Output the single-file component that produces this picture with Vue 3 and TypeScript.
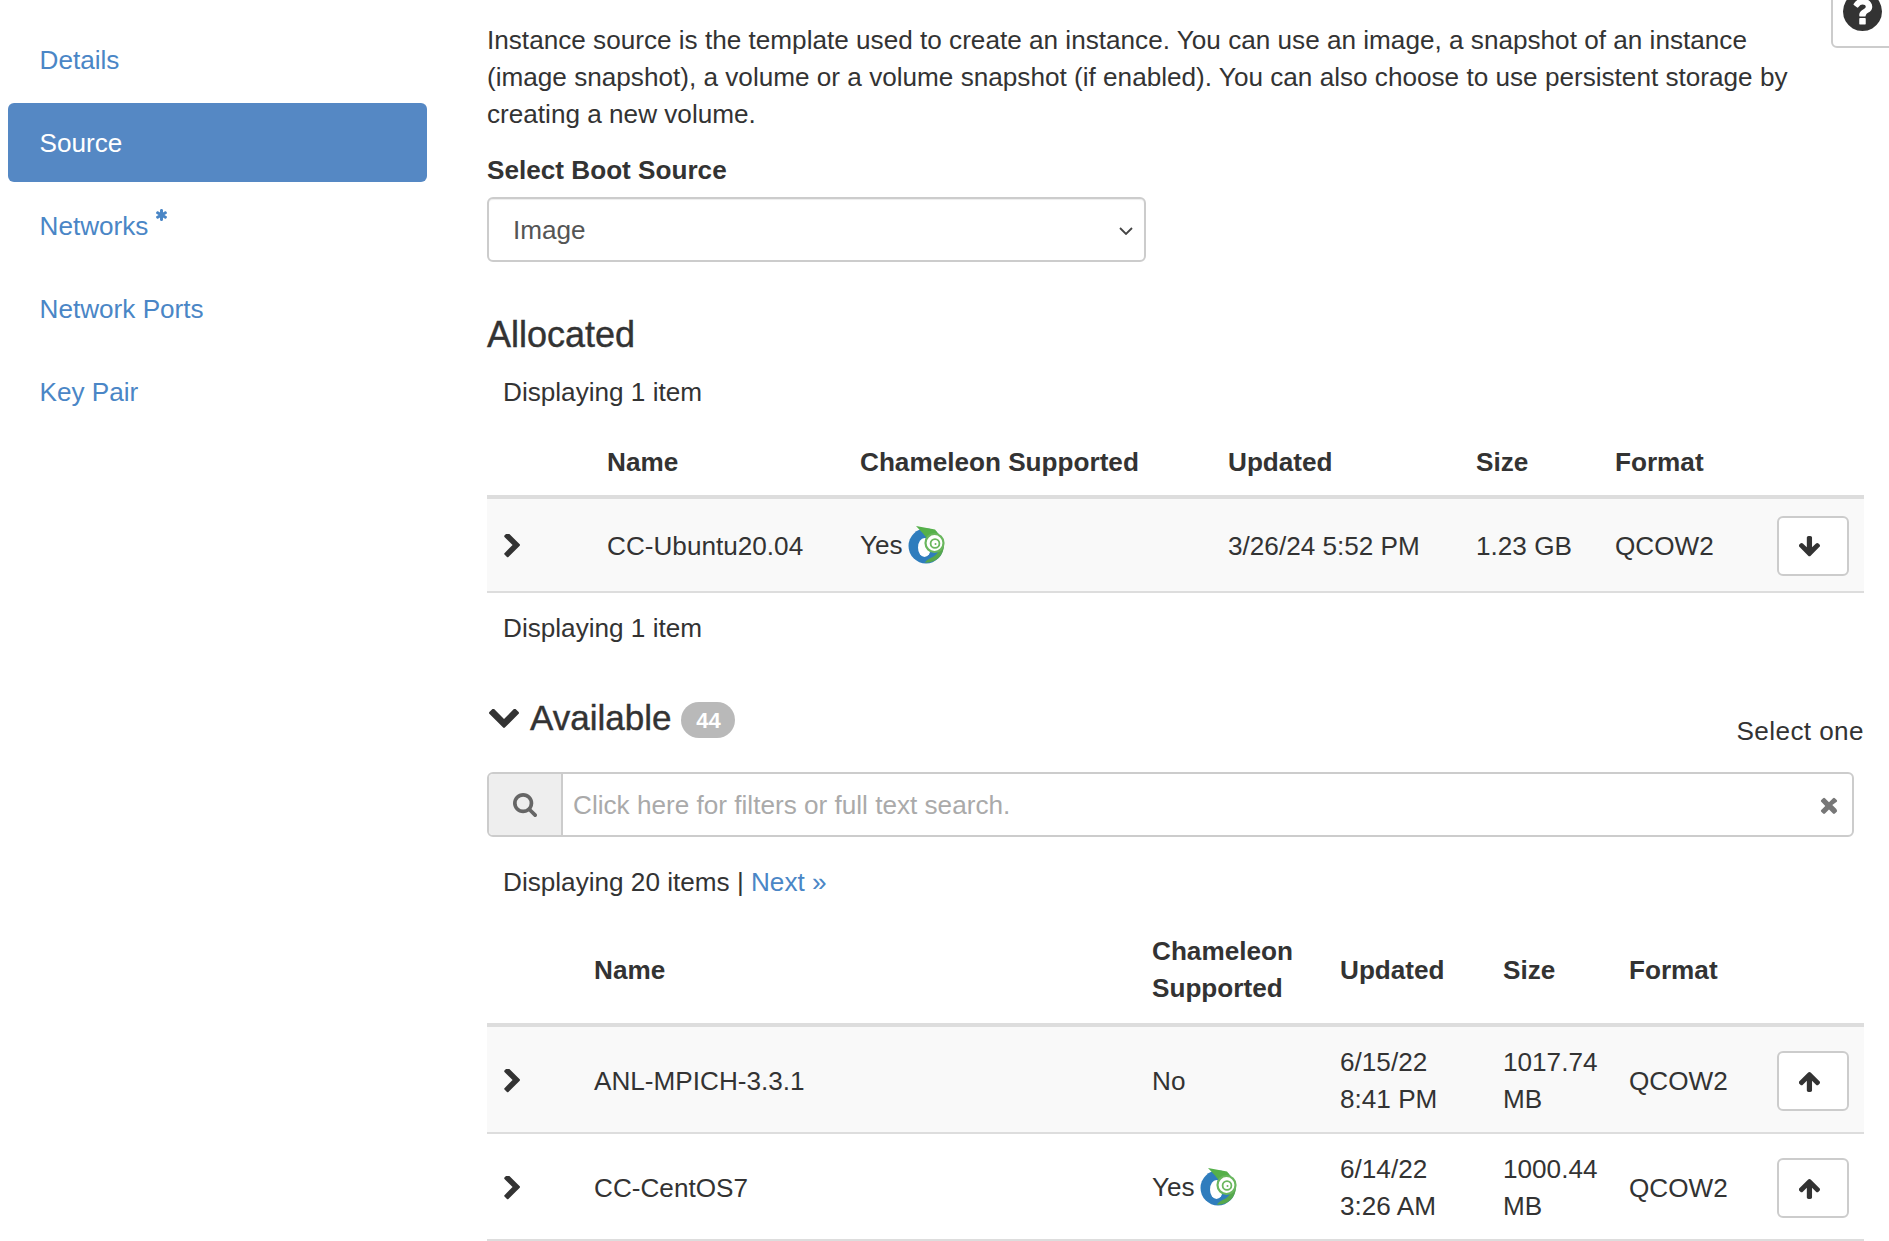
<script setup lang="ts">
const navItems = [
  { label: 'Details', active: false, req: false },
  { label: 'Source', active: true, req: false },
  { label: 'Networks', active: false, req: true },
  { label: 'Network Ports', active: false, req: false },
  { label: 'Key Pair', active: false, req: false },
]
const available = [
  { name: 'ANL-MPICH-3.3.1', supported: false, date: '6/15/22', time: '8:41 PM', size: '1017.74', unit: 'MB' },
  { name: 'CC-CentOS7', supported: true, date: '6/14/22', time: '3:26 AM', size: '1000.44', unit: 'MB' },
]
const chevronRight = 'M1363 877l-742 742q-19 19-45 19t-45-19l-166-166q-19-19-19-45t19-45l531-531-531-531q-19-19-19-45t19-45l166-166q19-19 45-19t45 19l742 742q19 19 19 45t-19 45z'
const arrowDown = 'M1675 832q0 53-37 90l-651 652q-39 37-91 37-53 0-90-37l-651-652q-38-36-38-90 0-53 38-91l74-75q39-37 91-37 53 0 90 37l294 294V256q0-52 38-90t90-38h128q52 0 90 38t38 90v704l294-294q37-37 90-37 52 0 91 37l75 75q37 39 37 91z'
const arrowUp = 'M1675 971q0 51-37 90l-75 75q-38 38-91 38-54 0-90-38l-294-293v704q0 52-37.5 84.5T960 1664H832q-53 0-90.5-32.5T704 1547V843l-294 293q-36 38-90 38t-90-38l-75-75q-38-38-38-90 0-53 38-91l651-651q35-37 90-37 54 0 91 37l651 651q37 39 37 91z'
</script>

<template>
  <div class="page">
    <nav class="side">
      <a v-for="item in navItems" :key="item.label" class="nav-item" :class="{ active: item.active }">
        {{ item.label }}
        <svg v-if="item.req" class="req" viewBox="180 128 1432 1536"><path fill="currentColor" d="M1546 1050q46 26 59.5 77.5T1593 1225l-64 110q-26 46-77.5 59.5T1354 1382l-266-153v307q0 52-38 90t-90 38H832q-52 0-90-38t-38-90v-307l-266 153q-46 26-97.5 12.5T263 1335l-64-110q-26-46-12.5-97.5T246 1050l266-154-266-154q-46-26-59.5-77.5T199 567l64-110q26-46 77.5-59.5T438 410l266 153V256q0-52 38-90t90-38h128q52 0 90 38t38 90v307l266-153q46-26 97.5-12.5T1529 457l64 110q26 46 12.5 97.5T1546 742l-266 154z"/></svg>
      </a>
    </nav>

    <main class="main">
      <p class="intro">Instance source is the template used to create an instance. You can use an image, a snapshot of an instance (image snapshot), a volume or a volume snapshot (if enabled). You can also choose to use persistent storage by creating a new volume.</p>

      <div class="label">Select Boot Source</div>
      <div class="select">
        <span>Image</span>
        <svg class="caret" viewBox="0 0 14 8"><path d="M1 1l6 6 6-6" fill="none" stroke="#444" stroke-width="1.8"/></svg>
      </div>

      <h2 class="heading alloc-head">Allocated</h2>
      <div class="count">Displaying 1 item</div>

      <table class="tbl tbl-alloc">
        <thead>
          <tr>
            <th class="c1"></th><th class="c2">Name</th><th class="c3">Chameleon Supported</th><th class="c4">Updated</th><th class="c5">Size</th><th class="c6">Format</th><th class="c7"></th>
          </tr>
        </thead>
        <tbody>
          <tr class="shade">
            <td><svg class="chev" viewBox="335 154 1047 1484"><path :d="chevronRight"/></svg></td>
            <td>CC-Ubuntu20.04</td>
            <td>
              <span class="yes">Yes
                <svg class="logo" viewBox="0 0 37 38">
                  <circle cx="18" cy="20" r="17.500" fill="#2f7dbd"/>
                  <path d="M36 16c1 9-4 18-13 20-3 .6-5 .8-6 .8 1-2 3-3.500 6-5 5-2 8-6 9-11z" fill="#57a84c"/>
                  <ellipse cx="16.500" cy="21.500" rx="6.500" ry="9.500" fill="#fff"/>
                  <path d="M8 0l19 3.500 4 5-9 1-3 3-4-5z" fill="#55b04a"/>
                  <circle cx="26.500" cy="17" r="9" fill="#fff" stroke="#6ab75e" stroke-width="2.200"/>
                  <circle cx="27" cy="17.500" r="4.400" fill="none" stroke="#6ab75e" stroke-width="1.800"/>
                  <circle cx="27.500" cy="18" r="1" fill="#6ab75e"/>
                </svg>
              </span>
            </td>
            <td>3/26/24 5:52 PM</td>
            <td>1.23 GB</td>
            <td>QCOW2</td>
            <td class="act"><button class="mv"><svg class="arrow" viewBox="128 128 1547 1536"><path :d="arrowDown"/></svg></button></td>
          </tr>
        </tbody>
      </table>
      <div class="count count-foot">Displaying 1 item</div>

      <div class="avail-head">
        <h2 class="heading avail-title">
          <svg class="chev-down" viewBox="90 552 1612 1016"><path d="M1683 808l-742 741q-19 19-45 19t-45-19L109 808q-19-19-19-45.500t19-45.500l166-165q19-19 45-19t45 19l531 531 531-531q19-19 45-19t45 19l166 165q19 19 19 45.500t-19 45.500z"/></svg>
          Available
          <span class="badge">44</span>
        </h2>
        <span class="select-one">Select one</span>
      </div>

      <div class="search">
        <span class="addon"><svg class="search-ico" viewBox="64 128 1664 1664"><path d="M1216 832q0-185-131.500-316.500T768 384 451.500 515.500 320 832t131.500 316.500T768 1280t316.500-131.500T1216 832zm512 832q0 52-38 90t-90 38q-54 0-90-38l-343-342q-179 124-399 124-143 0-273.500-55.500t-225-150-150-225T64 832t55.500-273.500 150-225 225-150T768 128t273.500 55.500 225 150 150 225T1472 832q0 220-124 399l343 343q37 37 37 90z"/></svg></span>
        <span class="placeholder">Click here for filters or full text search.</span>
        <svg class="clear" viewBox="302 238 1188 1316"><path d="M1490 1322q0 40-28 68l-136 136q-28 28-68 28t-68-28l-294-294-294 294q-28 28-68 28t-68-28l-136-136q-28-28-28-68t28-68l294-294-294-294q-28-28-28-68t28-68l136-136q28-28 68-28t68 28l294 294 294-294q28-28 68-28t68 28l136 136q28 28 28 68t-28 68L1138 896l294 294q28 28 28 68z"/></svg>
      </div>

      <div class="count count-avail">Displaying 20 items | <a class="link">Next »</a></div>

      <table class="tbl tbl-avail">
        <thead>
          <tr>
            <th class="a1"></th><th class="a2">Name</th><th class="a3">Chameleon Supported</th><th class="a4">Updated</th><th class="a5">Size</th><th class="a6">Format</th><th class="a7"></th>
          </tr>
        </thead>
        <tbody>
          <tr v-for="(row, i) in available" :key="row.name" :class="{ shade: i === 0 }">
            <td><svg class="chev" viewBox="335 154 1047 1484"><path :d="chevronRight"/></svg></td>
            <td>{{ row.name }}</td>
            <td>
              <span v-if="row.supported" class="yes">Yes
                <svg class="logo" viewBox="0 0 37 38">
                  <circle cx="18" cy="20" r="17.500" fill="#2f7dbd"/>
                  <path d="M36 16c1 9-4 18-13 20-3 .6-5 .8-6 .8 1-2 3-3.500 6-5 5-2 8-6 9-11z" fill="#57a84c"/>
                  <ellipse cx="16.500" cy="21.500" rx="6.500" ry="9.500" fill="#fff"/>
                  <path d="M8 0l19 3.500 4 5-9 1-3 3-4-5z" fill="#55b04a"/>
                  <circle cx="26.500" cy="17" r="9" fill="#fff" stroke="#6ab75e" stroke-width="2.200"/>
                  <circle cx="27" cy="17.500" r="4.400" fill="none" stroke="#6ab75e" stroke-width="1.800"/>
                  <circle cx="27.500" cy="18" r="1" fill="#6ab75e"/>
                </svg>
              </span>
              <template v-else>No</template>
            </td>
            <td>{{ row.date }}<br>{{ row.time }}</td>
            <td>{{ row.size }}<br>{{ row.unit }}</td>
            <td>QCOW2</td>
            <td class="act"><button class="mv"><svg class="arrow" viewBox="128 128 1547 1536"><path :d="arrowUp"/></svg></button></td>
          </tr>
        </tbody>
      </table>
    </main>

    <div class="help">
      <svg class="help-ico" viewBox="128 128 1536 1536"><path d="M1024 1376v-192q0-14-9-23t-23-9H800q-14 0-23 9t-9 23v192q0 14 9 23t23 9h192q14 0 23-9t9-23zm256-672q0-88-55.500-163T1086 425t-170-41q-243 0-371 213-15 24 8 42l132 100q7 6 19 6 16 0 25-12 53-68 86-92 34-24 86-24 48 0 85.500 26t37.500 59q0 38-20 61t-68 45q-63 28-115.500 86.500T768 1020v36q0 14 9 23t23 9h192q14 0 23-9t9-23q0-19 21.500-49.500T1100 957q32-18 49-28.500t46-35 44.500-48 28-60.500 12.500-81zm384 192q0 209-103 385.500T1281.500 1561 896 1664t-385.500-103T231 1281.500 128 896t103-385.500T510.500 231 896 128t385.500 103T1561 510.500 1664 896z"/></svg>
    </div>
  </div>
</template>

<style>
html, body { margin: 0; background: #fff; overflow: hidden; }
</style>

<style scoped>
.page {
  position: relative;
  display: flex;
  height: 1241px;
  overflow: hidden;
  font-family: "Liberation Sans", Arial, sans-serif;
  font-size: 26.15px;
  line-height: 37px;
  color: #333;
  background: #fff;
}
.side {
  display: flex;
  flex-direction: column;
  gap: 4px;
  box-sizing: border-box;
  flex: 0 0 auto;
  width: 419px;
  margin: 20px 0 0 8px;
}
.nav-item {
  display: flex;
  align-items: center;
  box-sizing: border-box;
  height: 79px;
  padding: 2px 0 0 31.5px;
  border-radius: 6px;
  color: #4a86c6;
}
.nav-item.active { background: #5588c4; color: #fff; }
.req { width: 11px; height: 12px; margin: -24px 0 0 8px; }
.main { flex: 0 0 auto; width: 1377px; margin-left: 60px; }
.intro { width: 1320px; margin: 22px 0 0; }
.label { margin-top: 19px; font-weight: 700; }
.select {
  display: flex;
  align-items: center;
  justify-content: space-between;
  box-sizing: border-box;
  width: 659px;
  height: 65px;
  margin-top: 8px;
  padding: 2px 11px 0 24px;
  border: 2px solid #ccc;
  border-radius: 6px;
  color: #555;
  box-shadow: inset 0 1px 1px rgba(0, 0, 0, .075);
}
.caret { width: 14px; height: 8px; }
.heading { margin: 0; font-size: 36px; line-height: 40px; font-weight: 400; -webkit-text-stroke: .4px #333; }
.alloc-head { margin-top: 53px; }
.count { padding-left: 16px; }
.alloc-head + .count { margin-top: 19px; }
.tbl {
  width: 1377px;
  table-layout: fixed;
  border-collapse: separate;
  border-spacing: 0;
}
.tbl-alloc { margin-top: 16px; }
.tbl th {
  padding: 17px 15px 14px;
  text-align: left;
  vertical-align: middle;
  font-weight: 700;
  border-bottom: 4px solid #ddd;
}
.tbl-avail th { padding-bottom: 16px; }
.tbl td {
  padding: 17px 15px 15px;
  vertical-align: middle;
  border-bottom: 2px solid #ddd;
}
.tbl-avail td { padding: 17px 15px 14px; }
.tbl td.act { padding-right: 16px; padding-left: 15px; text-align: right; }
.shade td { background: #f9f9f9; }
.c1 { width: 105px; } .c2 { width: 253px; } .c3 { width: 368px; }
.c4 { width: 248px; } .c5 { width: 139px; } .c6 { width: 162px; } .c7 { width: 102px; }
.a1 { width: 92px; } .a2 { width: 558px; } .a3 { width: 188px; }
.a4 { width: 163px; } .a5 { width: 126px; } .a6 { width: 148px; } .a7 { width: 102px; }
.tbl th, .tbl td { box-sizing: border-box; }
.chev { display: block; width: 16px; height: 24px; margin-left: 2px; fill: #333; }
.yes { display: flex; align-items: center; gap: 5px; margin-top: -2px; }
.logo { width: 37px; height: 38px; margin-top: -1px; }
.mv {
  display: inline-flex;
  align-items: center;
  justify-content: center;
  box-sizing: border-box;
  width: 72px;
  height: 60px;
  padding: 0;
  vertical-align: middle;
  background: #fff;
  border: 2px solid #ccc;
  border-radius: 6px;
}
.arrow { width: 21px; height: 21px; fill: #333; margin-right: 8px; }
.count-foot { margin-top: 17px; }
.avail-head { display: flex; justify-content: space-between; align-items: flex-end; margin-top: 51px; }
.avail-title { display: flex; align-items: center; font-size: 35px; }
.chev-down { width: 30px; height: 19px; margin: 0 11px 0 2px; fill: #333; }
.badge {
  display: inline-block;
  box-sizing: border-box;
  min-width: 54px;
  height: 36px;
  margin: 4px 0 0 10px;
  padding: 0 12px;
  border-radius: 18px;
  background: #b9b9b9;
  color: #fff;
  font-size: 22px;
  font-weight: 700;
  line-height: 38px;
  text-align: center;
  -webkit-text-stroke: 0;
}
.select-one { line-height: 37px; margin-bottom: -12px; letter-spacing: .4px; }
.search {
  display: flex;
  align-items: center;
  box-sizing: border-box;
  width: 1367px;
  height: 65px;
  margin-top: 34px;
  border: 2px solid #ccc;
  border-radius: 6px;
}
.addon {
  display: flex;
  align-items: center;
  justify-content: center;
  align-self: stretch;
  box-sizing: border-box;
  width: 74px;
  background: #eee;
  border-right: 2px solid #ccc;
  border-radius: 4px 0 0 4px;
}
.search-ico { width: 24px; height: 24px; fill: #666; }
.placeholder { flex: 1; padding: 2px 0 0 10px; color: #aaa; }
.clear { width: 18px; height: 18px; margin-right: 14px; fill: #777; }
.count-avail { margin-top: 27px; }
.link { color: #4a86c6; }
.tbl-avail { margin-top: 15px; }
.help {
  position: absolute;
  top: -2px;
  left: 1831px;
  box-sizing: border-box;
  width: 70px;
  height: 50px;
  border: 2px solid #ccc;
  border-radius: 0 0 0 6px;
}
.help-ico { position: absolute; left: 10px; top: -8px; width: 39px; height: 39px; fill: #333; }
</style>
